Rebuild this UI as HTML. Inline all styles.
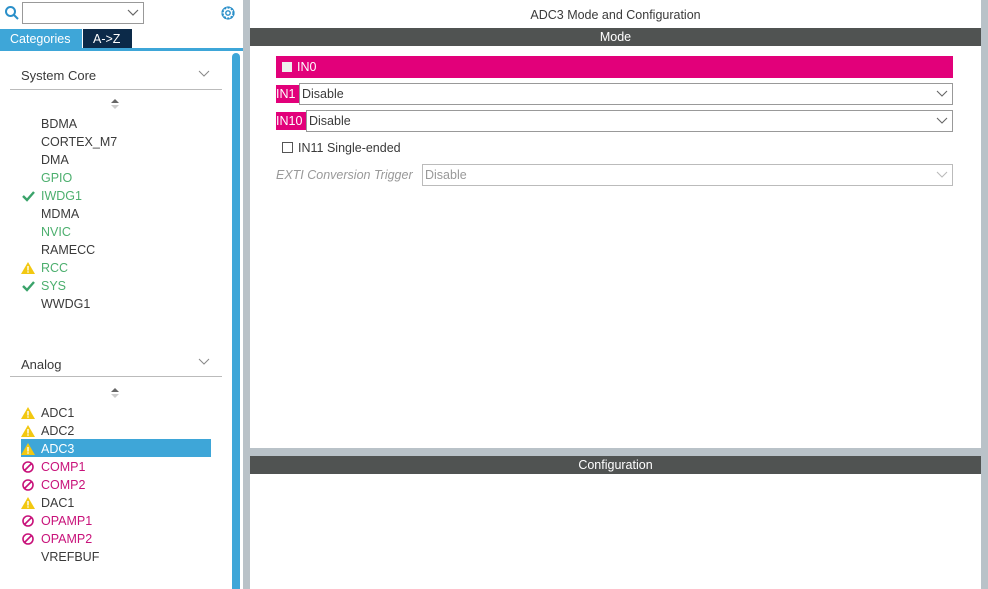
<!DOCTYPE html><html><head><style>
*{margin:0;padding:0;box-sizing:border-box}
body{width:988px;height:589px;overflow:hidden;background:#fff;font-family:"Liberation Sans",sans-serif;position:relative;color:#3a3a3a}
.a{position:absolute}
.it{position:absolute;left:41px;font-size:12.5px;line-height:18px;height:18px}
.g{color:#4caf6e}.m{color:#c8127a}
.ic{position:absolute;left:-20px;top:0;width:16px;height:18px}
.sel{color:#fff}
.dd{position:absolute;height:22px;border:1px solid #999;background:#fff;font-size:12.5px;line-height:21px;padding-left:2px}
.dd svg{position:absolute;right:4px;top:6px}
.lab{position:absolute;background:#e2007a;color:#fff;font-size:12.5px;line-height:19px;height:18px;padding-left:0}
</style></head><body>
<svg class="a" style="left:4px;top:5px" width="16" height="16"><circle cx="6.5" cy="6.5" r="4.5" fill="none" stroke="#2a8fc9" stroke-width="2"/><line x1="10" y1="10" x2="14" y2="14" stroke="#2a8fc9" stroke-width="2"/></svg>
<div class="a" style="left:22px;top:2px;width:122px;height:22px;border:1px solid #999"></div>
<svg class="a" style="left:127px;top:9px" width="12" height="8"><polyline points="1,1 6,6 11,1" fill="none" stroke="#666" stroke-width="1.2"/></svg>
<svg class="a" style="left:219px;top:4px" width="18" height="18" viewBox="0 0 18 18"><circle cx="9" cy="9" r="5.5" fill="none" stroke="#2a8fc9" stroke-width="2.2" stroke-dasharray="2.2 1.4"/><circle cx="9" cy="9" r="6" fill="none" stroke="#2a8fc9" stroke-width="1"/><circle cx="9" cy="9" r="2.2" fill="none" stroke="#2a8fc9" stroke-width="1.4"/></svg>
<div class="a" style="left:0;top:29px;width:82px;height:20px;background:#3ea6d8;color:#fff;font-size:12.5px;line-height:20px;padding-left:10px">Categories</div>
<div class="a" style="left:83px;top:29px;width:49px;height:20px;background:#0c2a49;color:#fff;font-size:12.5px;line-height:20px;padding-left:10px">A-&gt;Z</div>
<div class="a" style="left:0;top:48px;width:243px;height:3px;background:#3ea6d8"></div>
<div class="a" style="left:232px;top:53px;width:8px;height:536px;background:#3ea6d8;border-radius:4px 4px 0 0"></div>
<div class="a" style="left:243px;top:0;width:7px;height:589px;background:#b9c2c8"></div>

<div class="a" style="left:21px;top:68px;font-size:13px">System Core</div>
<svg class="a" style="left:198px;top:70px" width="12" height="8"><polyline points="1,1 6,6 11,1" fill="none" stroke="#888" stroke-width="1"/></svg>
<div class="a" style="left:10px;top:89px;width:212px;height:1px;background:#bbb"></div>
<svg class="a" style="left:111px;top:99px" width="8" height="10"><polygon points="4,0 8,4 0,4" fill="#666"/><polygon points="0,6 8,6 4,10" fill="#ccc"/></svg>

<div class="it" style="top:115px">BDMA</div>
<div class="it" style="top:133px">CORTEX_M7</div>
<div class="it" style="top:151px">DMA</div>
<div class="it g" style="top:169px">GPIO</div>
<div class="it g" style="top:187px"><svg class="ic" viewBox="0 0 16 18"><polyline points="2,9 6,13 13,5" fill="none" stroke="#3aa36a" stroke-width="2.4"/></svg>IWDG1</div>
<div class="it" style="top:205px">MDMA</div>
<div class="it g" style="top:223px">NVIC</div>
<div class="it" style="top:241px">RAMECC</div>
<div class="it g" style="top:259px"><svg class="ic" viewBox="0 0 16 18"><polygon points="7,3 14,15 0,15" fill="#f2c811"/><rect x="6.3" y="7" width="1.4" height="4.5" fill="#fff"/><rect x="6.3" y="12.3" width="1.4" height="1.4" fill="#fff"/></svg>RCC</div>
<div class="it g" style="top:277px"><svg class="ic" viewBox="0 0 16 18"><polyline points="2,9 6,13 13,5" fill="none" stroke="#3aa36a" stroke-width="2.4"/></svg>SYS</div>
<div class="it" style="top:295px">WWDG1</div>

<div class="a" style="left:21px;top:357px;font-size:13px">Analog</div>
<svg class="a" style="left:198px;top:358px" width="12" height="8"><polyline points="1,1 6,6 11,1" fill="none" stroke="#888" stroke-width="1"/></svg>
<div class="a" style="left:10px;top:376px;width:212px;height:1px;background:#bbb"></div>
<svg class="a" style="left:111px;top:388px" width="8" height="10"><polygon points="4,0 8,4 0,4" fill="#666"/><polygon points="0,6 8,6 4,10" fill="#ccc"/></svg>

<div class="a" style="left:21px;top:439px;width:190px;height:18px;background:#3ea6d8"></div>
<div class="it" style="top:404px"><svg class="ic" viewBox="0 0 16 18"><polygon points="7,3 14,15 0,15" fill="#f2c811"/><rect x="6.3" y="7" width="1.4" height="4.5" fill="#fff"/><rect x="6.3" y="12.3" width="1.4" height="1.4" fill="#fff"/></svg>ADC1</div>
<div class="it" style="top:422px"><svg class="ic" viewBox="0 0 16 18"><polygon points="7,3 14,15 0,15" fill="#f2c811"/><rect x="6.3" y="7" width="1.4" height="4.5" fill="#fff"/><rect x="6.3" y="12.3" width="1.4" height="1.4" fill="#fff"/></svg>ADC2</div>
<div class="it sel" style="top:440px"><svg class="ic" viewBox="0 0 16 18"><polygon points="7,3 14,15 0,15" fill="#f2c811"/><rect x="6.3" y="7" width="1.4" height="4.5" fill="#fff"/><rect x="6.3" y="12.3" width="1.4" height="1.4" fill="#fff"/></svg>ADC3</div>
<div class="it m" style="top:458px"><svg class="ic" viewBox="0 0 16 18"><circle cx="7" cy="9" r="5" fill="none" stroke="#c8127a" stroke-width="1.6"/><line x1="3.5" y1="12.5" x2="10.5" y2="5.5" stroke="#c8127a" stroke-width="1.6"/></svg>COMP1</div>
<div class="it m" style="top:476px"><svg class="ic" viewBox="0 0 16 18"><circle cx="7" cy="9" r="5" fill="none" stroke="#c8127a" stroke-width="1.6"/><line x1="3.5" y1="12.5" x2="10.5" y2="5.5" stroke="#c8127a" stroke-width="1.6"/></svg>COMP2</div>
<div class="it" style="top:494px"><svg class="ic" viewBox="0 0 16 18"><polygon points="7,3 14,15 0,15" fill="#f2c811"/><rect x="6.3" y="7" width="1.4" height="4.5" fill="#fff"/><rect x="6.3" y="12.3" width="1.4" height="1.4" fill="#fff"/></svg>DAC1</div>
<div class="it m" style="top:512px"><svg class="ic" viewBox="0 0 16 18"><circle cx="7" cy="9" r="5" fill="none" stroke="#c8127a" stroke-width="1.6"/><line x1="3.5" y1="12.5" x2="10.5" y2="5.5" stroke="#c8127a" stroke-width="1.6"/></svg>OPAMP1</div>
<div class="it m" style="top:530px"><svg class="ic" viewBox="0 0 16 18"><circle cx="7" cy="9" r="5" fill="none" stroke="#c8127a" stroke-width="1.6"/><line x1="3.5" y1="12.5" x2="10.5" y2="5.5" stroke="#c8127a" stroke-width="1.6"/></svg>OPAMP2</div>
<div class="it" style="top:548px">VREFBUF</div>

<div class="a" style="left:981px;top:0;width:7px;height:589px;background:#b9c2c8"></div>
<div class="a" style="left:250px;top:8px;width:731px;text-align:center;font-size:12.5px">ADC3 Mode and Configuration</div>
<div class="a" style="left:250px;top:28px;width:731px;height:18px;background:#505352;color:#fff;text-align:center;font-size:12.5px;line-height:19px">Mode</div>
<div class="a" style="left:276px;top:56px;width:677px;height:22px;background:#e2007a"></div>
<div class="a" style="left:282px;top:62px;width:10px;height:10px;background:#eee"></div>
<div class="a" style="left:297px;top:60px;color:#fff;font-size:12.5px">IN0</div>
<div class="lab" style="left:276px;top:85px;width:23px">IN1</div>
<div class="dd" style="left:299px;top:83px;width:654px">Disable<svg width="12" height="8"><polyline points="1,1 6,6 11,1" fill="none" stroke="#666" stroke-width="1.1"/></svg></div>
<div class="lab" style="left:276px;top:112px;width:30px">IN10</div>
<div class="dd" style="left:306px;top:110px;width:647px">Disable<svg width="12" height="8"><polyline points="1,1 6,6 11,1" fill="none" stroke="#666" stroke-width="1.1"/></svg></div>
<div class="a" style="left:282px;top:142px;width:11px;height:11px;border:1px solid #555"></div>
<div class="a" style="left:298px;top:141px;font-size:12.5px">IN11 Single-ended</div>
<div class="a" style="left:276px;top:168px;font-size:12.5px;font-style:italic;color:#999">EXTI Conversion Trigger</div>
<div class="dd" style="left:422px;top:164px;width:531px;color:#999;border-color:#bbb">Disable<svg width="12" height="8"><polyline points="1,1 6,6 11,1" fill="none" stroke="#bbb" stroke-width="1.1"/></svg></div>

<div class="a" style="left:250px;top:448px;width:731px;height:8px;background:#b9c2c8"></div>
<div class="a" style="left:250px;top:456px;width:731px;height:18px;background:#505352;color:#fff;text-align:center;font-size:12.5px;line-height:19px">Configuration</div>
</body></html>
